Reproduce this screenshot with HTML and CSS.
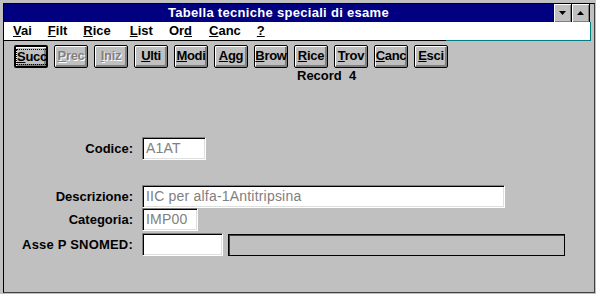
FILE: index.html
```html
<!DOCTYPE html>
<html lang="it">
<head>
  <meta charset="UTF-8" />
  <title>Tabella tecniche speciali di esame</title>
  <link rel="stylesheet" href="styles.css">
</head>
<body>
  <div class="window">
    <div class="titlebar">
      <div class="title">Tabella tecniche speciali di esame</div>
      <div class="tbtn">
        <svg width="7" height="4" viewBox="0 0 7 4"><polygon points="0,0 7,0 3.5,4" fill="#000"/></svg>
      </div>
      <div class="tbtn last">
        <svg width="7" height="4" viewBox="0 0 7 4"><polygon points="0,4 7,4 3.5,0" fill="#000"/></svg>
      </div>
    </div>

    <div class="menubar">
      <span class="menu-item"><u>V</u>ai</span>
      <span class="menu-item"><u>F</u>ilt</span>
      <span class="menu-item"><u>R</u>ice</span>
      <span class="menu-item"><u>L</u>ist</span>
      <span class="menu-item">Or<u>d</u></span>
      <span class="menu-item"><u>C</u>anc</span>
      <span class="menu-item"><u>?</u></span>
    </div>

    <div class="content">
      <div class="toolbar">
        <div class="btn default"><span class="focus"><u>S</u>ucc</span></div>
        <div class="btn disabled"><u>P</u>rec</div>
        <div class="btn disabled"><u>I</u>niz</div>
        <div class="btn"><u>U</u>lti</div>
        <div class="btn"><u>M</u>odi</div>
        <div class="btn"><u>A</u>gg</div>
        <div class="btn"><u>B</u>row</div>
        <div class="btn"><u>R</u>ice</div>
        <div class="btn"><u>T</u>rov</div>
        <div class="btn"><u>C</u>anc</div>
        <div class="btn"><u>E</u>sci</div>
      </div>

      <div class="record">Record&nbsp;&nbsp;4</div>

      <div class="form">
        <div class="field codice">
          <label>Codice:</label>
          <div class="input w-codice">A1AT</div>
        </div>
        <div class="field descr">
          <label>Descrizione:</label>
          <div class="input w-descr">IIC per alfa-1Antitripsina</div>
        </div>
        <div class="field">
          <label>Categoria:</label>
          <div class="input w-cat">IMP00</div>
        </div>
        <div class="field asse">
          <label>Asse P SNOMED:</label>
          <div class="input w-asse"></div>
          <div class="readonly"></div>
        </div>
      </div>
    </div>
  </div>
</body>
</html>
```

FILE: styles.css
```css
body {
  margin: 0;
  padding: 0;
  background: #c0c0c0;
  font-family: 'Liberation Sans', Arial, sans-serif;
  font-size: 13px;
  font-weight: bold;
  color: #000;
  width: 596px;
  height: 294px;
  overflow: hidden;
}

.window {
  margin: 3px 1px 1px 3px;
  height: 288px;
  border-top: 1px solid #000;
  border-left: 1px solid #000;
  border-right: 1px solid #404040;
  border-bottom: 1px solid #404040;
  box-sizing: content-box;
  display: flex;
  flex-direction: column;
}

/* title bar */
.titlebar {
  display: flex;
  height: 18px;
  margin-right: 4px;
}

.title {
  flex: 1;
  background: #000080;
  color: #fff;
  text-align: center;
  line-height: 18px;
  letter-spacing: 0.3px;
}

.tbtn {
  width: 17px;
  height: 18px;
  border-left: 1px solid #000;
  background: #c0c0c0;
  box-shadow: inset 1px 1px 0 #fff, inset -1px -1px 0 #808080;
  display: flex;
  align-items: center;
  justify-content: center;
}

.tbtn.last {
  border-right: 1px solid #000;
}

/* menu */
.menubar {
  position: relative;
  height: 18px;
  margin-right: 3px;
  background: #fff;
  border-right: 1px solid #008080;
  border-bottom: 1px solid #000;
  display: flex;
  align-items: center;
  padding-left: 9px;
  gap: 16px;
}

.menubar::after {
  content: '';
  position: absolute;
  left: 442px;
  right: -1px;
  bottom: -1px;
  height: 1px;
  background: #008080;
}

.menu-item {
  line-height: 16px;
}

.menu-item:nth-child(3) {
  margin-right: 3px;
}

.menu-item:nth-child(5) {
  margin-right: 1px;
}

/* content */
.content {
  flex: 1;
  padding: 4px 0 0 10px;
}

.toolbar {
  display: flex;
  gap: 6px;
}

.btn {
  box-sizing: border-box;
  width: 34px;
  height: 23px;
  border: 1px solid #000;
  border-radius: 2px;
  background: #c0c0c0;
  box-shadow: inset 1px 1px 0 #fff, inset -2px -2px 0 #808080;
  text-align: center;
  line-height: 19px;
  letter-spacing: -0.3px;
  overflow: hidden;
  white-space: nowrap;
  padding: 0;
}

.btn.default {
  border-width: 2px;
  line-height: 17px;
  padding: 1px 1px 0 1px;
}

.btn.default .focus {
  display: inline-block;
  outline: 1px dotted #000;
  outline-offset: 0;
  line-height: 14px;
}

.btn.disabled {
  color: #808080;
  text-shadow: 1px 1px 0 #fff;
}

.record {
  margin: 1px 0 0 283px;
  line-height: 14px;
}

/* form */
.form {
  margin-top: 54px;
}

.field {
  display: flex;
  align-items: center;
  gap: 9px;
  height: 23px;
}

.field label {
  width: 119px;
  text-align: right;
}

.field.asse label {
  letter-spacing: 0.2px;
}

.field.descr {
  margin-top: 25px;
}

.field.asse {
  margin-top: 2px;
}

.input {
  box-sizing: border-box;
  height: 23px;
  background: #fff;
  border: 1px solid;
  border-color: #808080 #fff #fff #808080;
  box-shadow: inset 1px 1px 0 #000, inset -1px -1px 0 #dfdfdf;
  color: #808080;
  font-size: 14px;
  font-weight: normal;
  letter-spacing: 0.2px;
  line-height: 21px;
  padding-left: 3px;
  white-space: nowrap;
  overflow: hidden;
}

.w-codice { width: 64px; }
.w-descr { width: 363px; }
.w-cat { width: 56px; }
.w-asse { width: 81px; }

.readonly {
  box-sizing: border-box;
  width: 337px;
  height: 22px;
  margin-left: -4px;
  border: 1px solid #000;
  box-shadow: inset 1px 1px 0 #404040;
}
```
